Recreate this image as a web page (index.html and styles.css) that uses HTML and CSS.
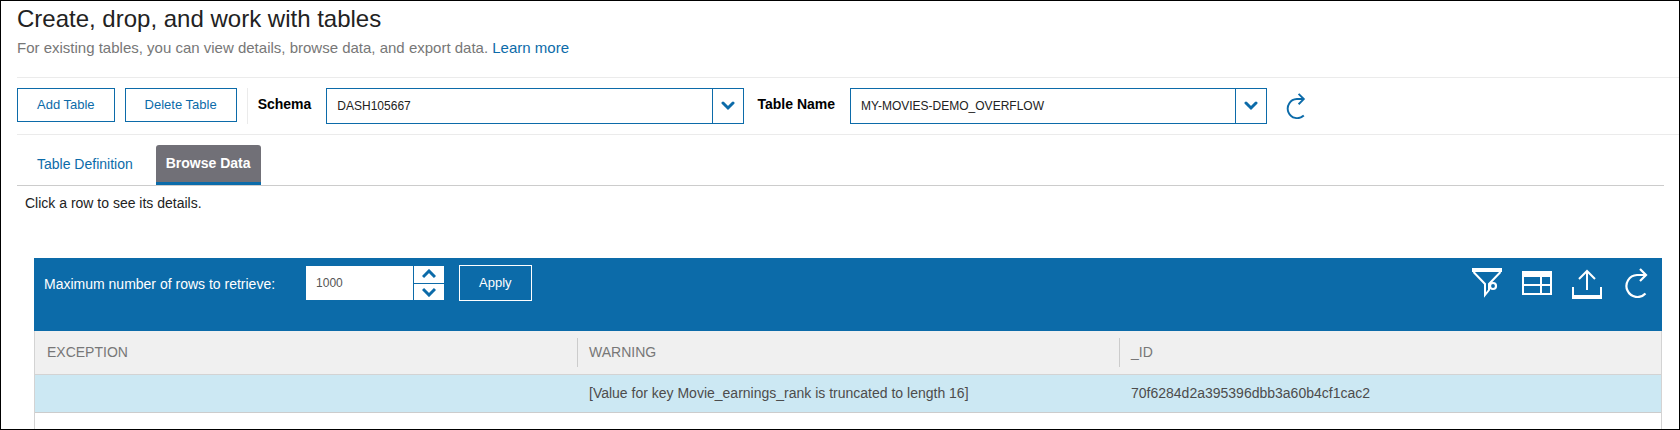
FILE: index.html
```html
<!DOCTYPE html>
<html lang="en">
<head>
<meta charset="utf-8">
<title>Tables</title>
<link rel="stylesheet" href="styles.css">
</head>
<body>
<header class="page-header">
  <h1 class="title">Create, drop, and work with tables</h1>
  <p class="subtitle">For existing tables, you can view details, browse data, and export data. <a class="link" href="#">Learn more</a></p>
</header>

<div class="toolbar">
  <div class="actions">
    <button class="btn" type="button">Add Table</button>
    <button class="btn" type="button">Delete Table</button>
  </div>
  <label class="field-label" for="schema">Schema</label>
  <div class="select">
    <select id="schema" class="select-input"><option>DASH105667</option></select>
    <span class="select-arrow"><svg width="14" height="10" viewBox="0 0 14 10"><path d="M2 2l5 5 5-5" fill="none" stroke="currentColor" stroke-width="3" stroke-linecap="round"/></svg></span>
  </div>
  <label class="field-label" for="table-name">Table Name</label>
  <div class="select">
    <select id="table-name" class="select-input"><option>MY-MOVIES-DEMO_OVERFLOW</option></select>
    <span class="select-arrow"><svg width="14" height="10" viewBox="0 0 14 10"><path d="M2 2l5 5 5-5" fill="none" stroke="currentColor" stroke-width="3" stroke-linecap="round"/></svg></span>
  </div>
  <button class="icon-btn refresh" type="button" aria-label="Refresh tables">
    <svg width="20" height="26" viewBox="0 0 22 30"><path d="M20 26A11 11 0 1 1 12 7h8M14 1l6 6-6 6" fill="none" stroke="currentColor" stroke-width="2.2"/></svg>
  </button>
</div>

<nav class="tabs">
  <button class="tab" type="button">Table Definition</button>
  <button class="tab tab-active" type="button">Browse Data</button>
</nav>

<p class="hint">Click a row to see its details.</p>

<section class="grid">
  <div class="grid-bar">
    <label class="rows-label" for="rows">Maximum number of rows to retrieve:</label>
    <div class="spinner">
      <input id="rows" class="spinner-input" type="text" value="1000">
      <div class="spinner-buttons">
        <button class="spin" type="button" aria-label="Increase"><svg width="14" height="10" viewBox="0 0 14 10"><path d="M1 8l6-6 6 6" fill="none" stroke="currentColor" stroke-width="3"/></svg></button>
        <button class="spin" type="button" aria-label="Decrease"><svg width="14" height="10" viewBox="0 0 14 10"><path d="M1 2l6 6 6-6" fill="none" stroke="currentColor" stroke-width="3"/></svg></button>
      </div>
    </div>
    <button class="btn btn-light" type="button">Apply</button>
    <div class="grid-tools">
      <button class="icon-btn" type="button" aria-label="Filter">
        <svg width="30" height="30" viewBox="0 0 30 30" fill="none" stroke="currentColor"><path d="M0 2h30" stroke-width="4"/><path d="M1.500 4L13 16v11l4-5v-6L28.500 4" stroke-width="2"/><circle cx="21" cy="18" r="3" stroke-width="2.200"/></svg>
      </button>
      <button class="icon-btn" type="button" aria-label="Columns">
        <svg width="30" height="30" viewBox="0 0 30 30" fill="none" stroke="currentColor" stroke-width="2"><path d="M1 4v22h28V4M1 17h28M19 8v18"/><path d="M0 6h30" stroke-width="6"/></svg>
      </button>
      <button class="icon-btn" type="button" aria-label="Export">
        <svg width="30" height="31" viewBox="0 0 30 31" fill="none" stroke="currentColor" stroke-width="2"><path d="M15 22V3M7 11l8-8 8 8M1 19v9M29 19v9"/><path d="M0 29h30" stroke-width="4"/></svg>
      </button>
      <button class="icon-btn" type="button" aria-label="Refresh data">
        <svg width="30" height="30" viewBox="0 0 30 30"><path d="M23.500 25.500A11 11 0 1 1 15 7h9M18 1l6 6-6 6" fill="none" stroke="currentColor" stroke-width="2.200"/></svg>
      </button>
    </div>
  </div>
  <div class="grid-body">
    <table class="data">
      <thead>
        <tr>
          <th scope="col"><span class="head">EXCEPTION</span></th>
          <th scope="col"><span class="head">WARNING</span></th>
          <th scope="col"><span class="head">_ID</span></th>
        </tr>
      </thead>
      <tbody>
        <tr class="selected">
          <td></td>
          <td>[Value for key Movie_earnings_rank is truncated to length 16]</td>
          <td>70f6284d2a395396dbb3a60b4cf1cac2</td>
        </tr>
      </tbody>
    </table>
  </div>
</section>
</body>
</html>
```
FILE: styles.css
```css
* { box-sizing: border-box; }

body {
  margin: 0;
  min-height: 100vh;
  display: flex;
  flex-direction: column;
  border: 1px solid #000;
  background: #fff;
  color: #222;
  font-family: "Liberation Sans", Arial, sans-serif;
  font-size: 14px;
}

button, input, select {
  font: inherit;
  color: inherit;
  margin: 0;
  border-radius: 0;
}

button { cursor: pointer; }

.page-header { padding: 4px 16px 19px; }

.title {
  margin: 0;
  font-size: 24px;
  line-height: 28px;
  font-weight: 400;
}

.subtitle {
  margin: 5px 0 0;
  font-size: 15px;
  line-height: 20px;
  color: #777;
}

.link { color: #0c6ba9; text-decoration: none; }

.toolbar {
  display: flex;
  align-items: flex-start;
  margin-left: 16px;
  padding: 10px 0;
  border-top: 1px solid #ebebeb;
  border-bottom: 1px solid #ebebeb;
}

.actions {
  display: flex;
  gap: 10px;
  height: 36px;
  padding-right: 10px;
  border-right: 1px solid #ebebeb;
}

.btn {
  height: 34px;
  padding: 0 19px 2px;
  border: 1px solid #0c6ba9;
  background: transparent;
  color: #0c6ba9;
  font-size: 13px;
}

.field-label {
  padding: 0 15px 0 10px;
  font-size: 14px;
  line-height: 33px;
  font-weight: 700;
  color: #000;
}

.select {
  position: relative;
  flex: 0 0 25.1%;
  height: 36px;
  margin-right: 4px;
}

.select-input {
  width: 100%;
  height: 100%;
  padding: 0 42px 0 10px;
  border: 1px solid #0c6ba9;
  background: #fff;
  font-size: 12px;
  appearance: none;
}

.select-arrow {
  position: absolute;
  top: 0;
  right: 0;
  bottom: 0;
  width: 32px;
  display: flex;
  align-items: center;
  justify-content: center;
  border: 1px solid #0c6ba9;
  color: #0c6ba9;
  pointer-events: none;
}

.icon-btn {
  display: flex;
  padding: 0;
  border: 0;
  background: none;
}

.refresh { margin: 5px 0 0 15px; color: #0c6ba9; }

.tabs {
  display: flex;
  gap: 3px;
  margin: 10px 15px 0 16px;
  border-bottom: 1px solid #ccc;
}

.tab {
  height: 40px;
  padding: 0 20px 2px;
  border: 0;
  background: none;
  color: #0c6ba9;
}

.tab-active {
  padding: 0 10px 1px;
  border-bottom: 3px solid #0c6ba9;
  border-radius: 3px 3px 0 0;
  background: #717077;
  color: #fff;
  font-weight: 700;
}

.hint {
  margin: 7px 0 0 24px;
  font-size: 14px;
  line-height: 20px;
}

.grid {
  flex: 1;
  display: flex;
  flex-direction: column;
  margin: 45px 17px 0 33px;
}

.grid-bar {
  display: flex;
  align-items: flex-start;
  min-height: 73px;
  padding: 7px 10px 0;
  background: #0c6ba9;
  color: #fff;
}

.rows-label { line-height: 38px; }

.spinner {
  display: flex;
  gap: 1px;
  width: 138px;
  height: 34px;
  margin: 1px 15px 0 31px;
}

.spinner-input {
  flex: 1;
  min-width: 0;
  padding: 0 10px;
  border: 0;
  background: #fff;
  color: #555;
  font-size: 12px;
}

.spinner-buttons {
  display: flex;
  flex-direction: column;
  gap: 1px;
  width: 30px;
}

.spin {
  flex: 1;
  display: flex;
  align-items: center;
  justify-content: center;
  padding: 0;
  border: 0;
  background: #fff;
  color: #0c6ba9;
}

.btn-light {
  height: 36px;
  border-color: #fff;
  color: #fff;
}

.grid-tools {
  display: flex;
  align-items: flex-start;
  gap: 20px;
  margin: 3px 0 0 auto;
}

.grid-body {
  flex: 1;
  border: solid #d3d3d3;
  border-width: 0 1px;
}

.data {
  width: 100%;
  table-layout: fixed;
  border-collapse: collapse;
  text-align: left;
}

.data th {
  height: 43px;
  padding: 0;
  border-bottom: 1px solid #d3d3d3;
  background: #f0f0f0;
  color: #777;
  font-weight: 400;
}

.head {
  display: block;
  padding-left: 11px;
  border-left: 1px solid #ccc;
  line-height: 29px;
}

.data th:first-child .head { border-left-color: transparent; }

.data td {
  height: 38px;
  padding: 0 12px;
  border-bottom: 1px solid #ccc;
  color: #4c4c4c;
  font-size: 14px;
}

.selected { background: #cce8f3; }
```
